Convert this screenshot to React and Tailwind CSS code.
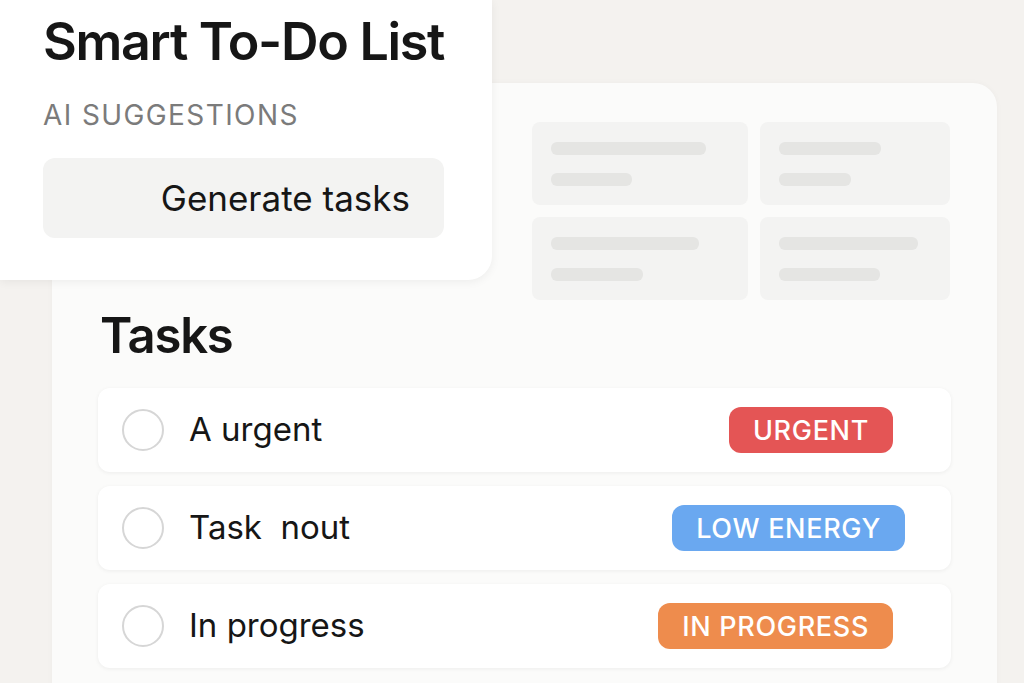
import React from "react";

const skeletons = [
    {a: "w-[155px]", b: "w-[81px]"},
    {a: "w-[102px]", b: "w-[72px]"},
    {a: "w-[148px]", b: "w-[92px]"},
    {a: "w-[139px]", b: "w-[101px]"},
];

const tasks = [
    {title: "A urgent", tag: "URGENT", tagClass: "bg-[#e45555] mr-[58px]"},
    {title: "Task  nout", tag: "LOW ENERGY", tagClass: "bg-[#6aa8f0] mr-[46px]"},
    {title: "In progress", tag: "IN PROGRESS", tagClass: "bg-[#ee8c4d] mr-[58px]"},
];

const TaskRow = ({task}) => (
    <div className="h-[84px] flex items-center bg-white rounded-xl shadow-[0_1px_4px_rgba(0,0,0,0.06)]">
        <span className="ml-[24px] w-[42px] h-[42px] rounded-full border-2 border-[#d6d6d6] shrink-0"/>
        <span className="ml-[25px] text-[33px] text-[#161616] whitespace-pre">{task.title}</span>
        <span className={`ml-auto h-[46px] px-[24px] pt-[2px] flex items-center rounded-xl text-white text-[27px] font-medium tracking-wide ${task.tagClass}`}>
            {task.tag}
        </span>
    </div>
);

export default function App() {
    return (
        <div className="relative w-[1024px] h-[683px] overflow-hidden bg-[#f4f2ef] font-['Inter',sans-serif]">
            <div className="absolute left-[52px] top-[83px] w-[945px] h-[640px] bg-[#fbfbfa] rounded-3xl shadow-[0_0_6px_rgba(0,0,0,0.03)] px-[46px] pt-[39px]">
                <div className="flex justify-end pr-[1px]">
                    <div className="grid grid-cols-[216px_190px] gap-[12px]">
                        {skeletons.map((s, i) => (
                            <div key={i} className="h-[83px] bg-[#f3f3f2] rounded-lg pl-[19px] pt-[20px] flex flex-col gap-[18px]">
                                <span className={`h-[13px] rounded-md bg-[#e5e5e3] ${s.a}`}/>
                                <span className={`h-[13px] rounded-md bg-[#e5e5e3] ${s.b}`}/>
                            </div>
                        ))}
                    </div>
                </div>
                <h2 className="mt-[4px] ml-[2px] text-[49px] leading-[64px] font-semibold tracking-tight text-[#161616]">Tasks</h2>
                <div className="mt-[20px] flex flex-col gap-[14px]">
                    {tasks.map((t) => <TaskRow key={t.tag} task={t}/>)}
                </div>
            </div>

            <div className="absolute left-0 top-0 w-[492px] h-[280px] bg-white rounded-br-3xl shadow-[0_2px_10px_rgba(0,0,0,0.06)] pl-[43px] pt-[11px]">
                <h1 className="text-[52px] leading-[62px] font-semibold tracking-tight text-[#161616]">Smart To-Do List</h1>
                <div className="mt-[26px] text-[28px] leading-[32px] tracking-wider text-[#7b7b7b]">AI SUGGESTIONS</div>
                <button type="button" className="mt-[27px] w-[401px] h-[80px] bg-[#f3f3f2] rounded-xl flex items-center justify-end pr-[34px] text-[35px] text-[#161616]">
                    Generate tasks
                </button>
            </div>
        </div>
    );
}
